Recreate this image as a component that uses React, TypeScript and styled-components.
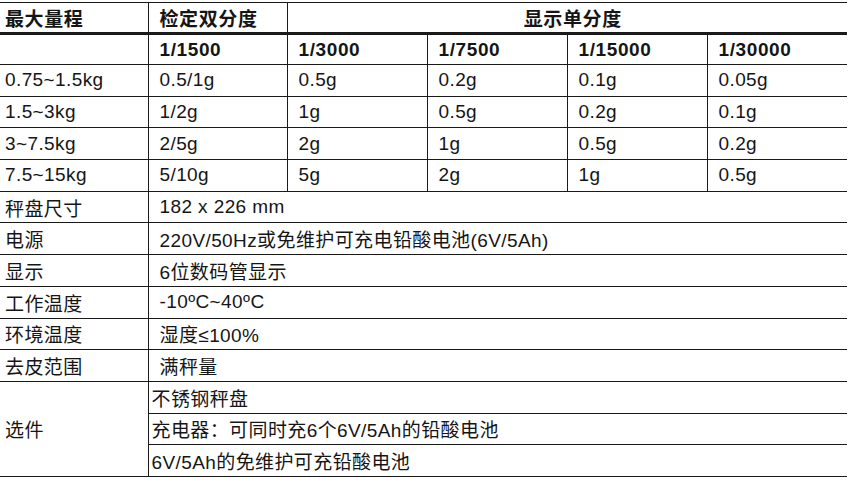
import React from 'react';
import styled, { createGlobalStyle } from 'styled-components';

const GlobalStyle = createGlobalStyle`
	html, body {
		margin: 0;
		padding: 0;
		background: #ffffff;
	}
`;

const Page = styled.div`
	padding-top: 2px;
`;

const Table = styled.table`
	border-collapse: collapse;
	table-layout: fixed;
	width: 847px;
	font-family: 'Liberation Sans', 'Noto Sans CJK SC', sans-serif;
	font-size: 19px;
	color: #151515;
`;

const HeadRow = styled.tr<{ $thick?: boolean }>`
	height: 31px;
	& > th {
		border-bottom: ${(p) => (p.$thick ? '3px' : '1px')} solid #1a1a1a;
	}
	&:first-child > th {
		border-top: 1px solid #1a1a1a;
	}
`;

const HeadCell = styled.th<{ $first?: boolean; $center?: boolean }>`
	font-weight: 700;
	text-align: ${(p) => (p.$center ? 'center' : 'left')};
	padding: 0 0 0 ${(p) => (p.$first ? '5px' : '11px')};
	border-left: ${(p) => (p.$first ? 'none' : '1px solid #1a1a1a')};
	letter-spacing: 0.6px;
	white-space: nowrap;
	vertical-align: middle;
`;

const Row = styled.tr`
	height: 31.7px;
`;

const Cell = styled.td<{ $first?: boolean; $tight?: boolean }>`
	padding: 0 0 0 ${(p) => (p.$first ? '5px' : p.$tight ? '3px' : '11px')};
	border-bottom: 1px solid #1a1a1a;
	border-left: ${(p) => (p.$first ? 'none' : '1px solid #1a1a1a')};
	white-space: nowrap;
	vertical-align: middle;
	letter-spacing: 0.4px;
`;

const scales = [
	['0.75~1.5kg', '0.5/1g', '0.5g', '0.2g', '0.1g', '0.05g'],
	['1.5~3kg', '1/2g', '1g', '0.5g', '0.2g', '0.1g'],
	['3~7.5kg', '2/5g', '2g', '1g', '0.5g', '0.2g'],
	['7.5~15kg', '5/10g', '5g', '2g', '1g', '0.5g'],
];

const specs = [
	['秤盘尺寸', '182 x 226 mm'],
	['电源', '220V/50Hz或免维护可充电铅酸电池(6V/5Ah)'],
	['显示', '6位数码管显示'],
	['工作温度', '-10ºC~40ºC'],
	['环境温度', '湿度≤100%'],
	['去皮范围', '满秤量'],
];

const options = ['不锈钢秤盘', '充电器：可同时充6个6V/5Ah的铅酸电池', '6V/5Ah的免维护可充铅酸电池'];

const App = () => {
	return (
		<Page>
			<GlobalStyle />
			<Table>
				<colgroup>
					<col style={{ width: 148 }} />
					<col style={{ width: 139 }} />
					<col style={{ width: 140 }} />
					<col style={{ width: 140 }} />
					<col style={{ width: 140 }} />
					<col style={{ width: 140 }} />
				</colgroup>
				<thead>
					<HeadRow $thick>
						<HeadCell $first>最大量程</HeadCell>
						<HeadCell>检定双分度</HeadCell>
						<HeadCell colSpan={4} $center>
							显示单分度
						</HeadCell>
					</HeadRow>
					<HeadRow>
						<HeadCell $first />
						<HeadCell>1/1500</HeadCell>
						<HeadCell>1/3000</HeadCell>
						<HeadCell>1/7500</HeadCell>
						<HeadCell>1/15000</HeadCell>
						<HeadCell>1/30000</HeadCell>
					</HeadRow>
				</thead>
				<tbody>
					{scales.map((row) => (
						<Row key={row[0]}>
							{row.map((value, i) => (
								<Cell key={i} $first={i === 0}>
									{value}
								</Cell>
							))}
						</Row>
					))}
					{specs.map(([label, value]) => (
						<Row key={label}>
							<Cell $first>{label}</Cell>
							<Cell colSpan={5}>{value}</Cell>
						</Row>
					))}
					{options.map((value, i) => (
						<Row key={value}>
							{i === 0 && (
								<Cell $first rowSpan={options.length}>
									选件
								</Cell>
							)}
							<Cell colSpan={5} $tight>
								{value}
							</Cell>
						</Row>
					))}
				</tbody>
			</Table>
		</Page>
	);
};

export default App;
